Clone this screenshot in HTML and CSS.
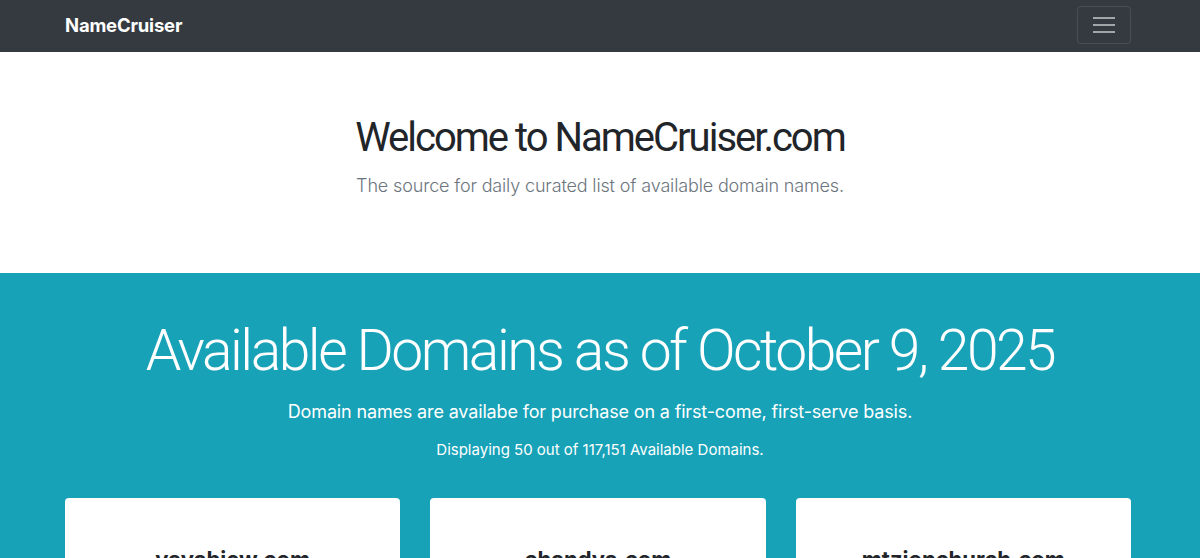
FILE: index.html
```html
<!DOCTYPE html>
<html lang="en">
<head>
<meta charset="utf-8">
<title>NameCruiser</title>
<link rel="stylesheet" href="styles.css">
</head>
<body>
<nav class="navbar">
  <div class="wrap nav-inner">
    <a class="brand" href="#">NameCruiser</a>
    <button class="toggler" aria-label="Toggle navigation">
      <svg width="22" height="18" viewBox="0 0 22 18"><path d="M0 2h22M0 9h22M0 16h22" stroke="rgba(255,255,255,0.55)" stroke-width="2"/></svg>
    </button>
  </div>
</nav>
<header class="hero">
  <h1 class="hero-title">Welcome to NameCruiser.com</h1>
  <p class="hero-lead">The source for daily curated list of available domain names.</p>
</header>
<section class="domains">
  <h2 class="domains-title">Available Domains as of October 9, 2025</h2>
  <p class="domains-lead">Domain names are availabe for purchase on a first-come, first-serve basis.</p>
  <p class="domains-count">Displaying 50 out of 117,151 Available Domains.</p>
  <div class="wrap grid">
    <div class="card"><h3 class="card-name">yayabiew.com</h3></div>
    <div class="card"><h3 class="card-name">chandva.com</h3></div>
    <div class="card"><h3 class="card-name">mtzionchurch.com</h3></div>
  </div>
</section>
</body>
</html>
```
FILE: styles.css
```css
* { box-sizing: border-box; }
html, body { margin: 0; padding: 0; }
body {
  font-family: Inter, "Noto Sans", "Liberation Sans", sans-serif;
  color: #212529;
  background: #fff;
  overflow: hidden;
}
.wrap {
  padding: 0 69px 0 65px;
}
.navbar {
  background: #343a40;
  height: 52px;
}
.nav-inner {
  height: 52px;
  display: flex;
  align-items: center;
  justify-content: space-between;
}
.brand {
  color: #fff;
  font-weight: 700;
  font-size: 18.5px;
  letter-spacing: -0.2px;
  text-decoration: none;
  margin-top: -3px;
}
.toggler {
  width: 54px;
  height: 38px;
  margin-top: -3px;
  background: transparent;
  border: 1px solid rgba(255,255,255,0.1);
  border-radius: 4px;
  display: flex;
  align-items: center;
  justify-content: center;
  padding: 0;
}
.hero {
  height: 221px;
  text-align: center;
  padding-top: 62px;
}
.hero-title {
  margin: 0;
  font-family: Roboto, Inter, sans-serif;
  font-size: 40px;
  font-weight: 400;
  line-height: 48px;
  letter-spacing: -2px;
  color: #212529;
}
.hero-lead {
  margin: 12px 0 0;
  font-size: 18px;
  font-weight: 300;
  color: #6c757d;
  line-height: 24px;
  letter-spacing: -0.15px;
}
.domains {
  background: #17a2b8;
  color: #fff;
  text-align: center;
  padding-top: 42px;
  height: 400px;
}
.domains-title {
  margin: 0;
  font-family: Roboto, Inter, sans-serif;
  font-size: 57px;
  font-weight: 300;
  line-height: 72px;
  letter-spacing: -2.5px;
}
.domains-lead {
  margin: 12px 0 0;
  font-size: 18px;
  font-weight: 400;
  line-height: 26px;
  letter-spacing: -0.15px;
}
.domains-count {
  margin: 15px 0 0;
  font-size: 15px;
  line-height: 20px;
}
.grid {
  display: grid;
  grid-template-columns: repeat(3, 1fr);
  gap: 30px;
  margin-top: 38px;
}
.card {
  background: #fff;
  border-radius: 4px;
  height: 160px;
  padding-top: 46px;
  color: #212529;
}
.card-name {
  margin: 0;
  font-size: 22px;
  font-weight: 700;
  line-height: 30px;
}
```
